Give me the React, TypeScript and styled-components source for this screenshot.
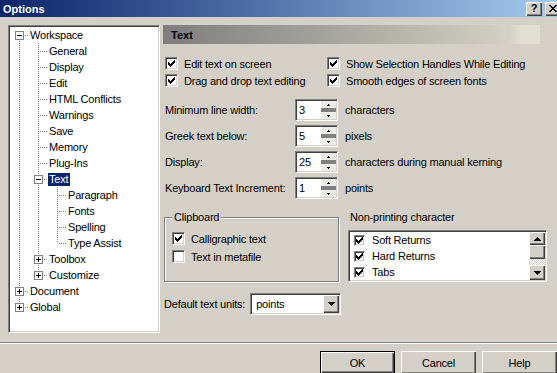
import React from 'react';
import styled, { createGlobalStyle, css } from 'styled-components';

const face = '#d4d0c8';
const shadow = '#808080';
const dark = '#404040';

const GlobalStyle = createGlobalStyle`
  html, body {
    margin: 0;
    padding: 0;
    background: ${face};
  }
  body {
    font: 11px 'Liberation Sans', Arial, sans-serif;
    letter-spacing: -0.2px;
    color: #000;
  }
  * { box-sizing: border-box; }
`;

const sunken = css`
  border-style: solid;
  border-width: 1px;
  border-color: ${shadow} #fff #fff ${shadow};
  box-shadow: inset 1px 1px ${dark}, inset -1px -1px ${face};
  padding: 1px;
`;

const raised = css`
  background: ${face};
  box-shadow: inset 1px 1px #fff, inset -1px -1px ${dark}, inset -2px -2px ${shadow};
`;

const Window = styled.div`
  width: 557px;
  height: 373px;
  overflow: hidden;
  display: flex;
  flex-direction: column;
`;

const TitleBar = styled.div`
  height: 17px;
  flex: none;
  display: flex;
  align-items: center;
  justify-content: space-between;
  padding-left: 3px;
  background: linear-gradient(to right, #0a246a, #a6caf0);
`;

const Title = styled.span`
  color: #fff;
  font-weight: bold;
  letter-spacing: 0;
`;

const Caps = styled.div`
  display: flex;
  gap: 3px;
  margin-right: -4px;
`;

const CapButton = styled.div`
  ${raised};
  width: 16px;
  height: 14px;
  display: flex;
  align-items: center;
  justify-content: center;
  font-weight: bold;
  font-size: 11px;
  line-height: 1;
`;

const Body = styled.div`
  display: flex;
  gap: 3px;
  padding: 8px 0 0 8px;
  height: 325px;
  flex: none;
`;

/* ---------- tree ---------- */

const Tree = styled.div`
  ${sunken};
  width: 152px;
  height: 308px;
  flex: none;
  background: #fff;
`;

const Row = styled.div`
  display: flex;
  height: 16px;
  align-items: center;
`;

const Guide = styled.div<{ $line: boolean }>`
  width: 19px;
  height: 16px;
  flex: none;
  ${(p) =>
    p.$line &&
    css`
      background: repeating-linear-gradient(to bottom, ${shadow} 0 1px, transparent 1px 2px) 9px 0 / 1px 100% no-repeat;
    `}
`;

const Connector = styled.div<{ $first: boolean; $last: boolean }>`
  position: relative;
  width: 19px;
  height: 16px;
  flex: none;
  &::before {
    content: '';
    position: absolute;
    left: 9px;
    top: ${(p) => (p.$first ? 8 : 0)}px;
    bottom: ${(p) => (p.$last ? 8 : 0)}px;
    width: 1px;
    background: repeating-linear-gradient(to bottom, ${shadow} 0 1px, transparent 1px 2px);
  }
  &::after {
    content: '';
    position: absolute;
    left: 10px;
    top: 8px;
    width: 9px;
    height: 1px;
    background: repeating-linear-gradient(to right, transparent 0 1px, ${shadow} 1px 2px);
  }
`;

const Expander = styled.svg`
  position: absolute;
  left: 5px;
  top: 4px;
  z-index: 1;
`;

const NodeLabel = styled.span<{ $selected?: boolean }>`
  height: 13px;
  line-height: 13px;
  padding: 0 2px 0 1px;
  white-space: nowrap;
  background: ${(p) => (p.$selected ? '#0a246a' : 'transparent')};
  color: ${(p) => (p.$selected ? '#fff' : '#000')};
`;

type Node = {
  label: string;
  kids?: Node[];
  collapsed?: boolean;
  selected?: boolean;
};

const tree: Node[] = [
  {
    label: 'Workspace',
    kids: [
      { label: 'General' },
      { label: 'Display' },
      { label: 'Edit' },
      { label: 'HTML Conflicts' },
      { label: 'Warnings' },
      { label: 'Save' },
      { label: 'Memory' },
      { label: 'Plug-Ins' },
      {
        label: 'Text',
        selected: true,
        kids: [{ label: 'Paragraph' }, { label: 'Fonts' }, { label: 'Spelling' }, { label: 'Type Assist' }],
      },
      { label: 'Toolbox', kids: [], collapsed: true },
      { label: 'Customize', kids: [], collapsed: true },
    ],
  },
  { label: 'Document', kids: [], collapsed: true },
  { label: 'Global', kids: [], collapsed: true },
];

type Flat = { node: Node; guides: boolean[]; first: boolean; last: boolean };

function flatten(nodes: Node[], guides: boolean[], out: Flat[]) {
  nodes.forEach((node, i) => {
    const last = i === nodes.length - 1;
    out.push({ node, guides, first: guides.length === 0 && i === 0, last });
    if (node.kids && !node.collapsed) flatten(node.kids, [...guides, !last], out);
  });
  return out;
}

const PlusMinus = ({ open }: { open: boolean }) => (
  <Expander width="9" height="9" viewBox="0 0 9 9" shapeRendering="crispEdges">
    <rect x="0.5" y="0.5" width="8" height="8" fill="#fff" stroke={shadow} />
    <path d="M2 4h5v1H2z" fill="#000" />
    {!open && <path d="M4 2h1v5H4z" fill="#000" />}
  </Expander>
);

const TreeView = () => (
  <Tree>
    {flatten(tree, [], []).map(({ node, guides, first, last }) => (
      <Row key={node.label}>
        {guides.map((g, i) => (
          <Guide key={i} $line={g} />
        ))}
        <Connector $first={first} $last={last}>
          {node.kids && <PlusMinus open={!node.collapsed} />}
        </Connector>
        <NodeLabel $selected={node.selected}>{node.label}</NodeLabel>
      </Row>
    ))}
  </Tree>
);

/* ---------- page ---------- */

const Page = styled.div`
  width: 394px;
  flex: none;
  display: flex;
  flex-direction: column;
`;

const PageHeader = styled.div`
  width: 377px;
  height: 19px;
  padding-left: 8px;
  display: flex;
  align-items: center;
  font-weight: bold;
  letter-spacing: 0;
  background: linear-gradient(
    to right,
    #7e7e7e 0%,
    #9c9c98 35%,
    #bdbcb0 70%,
    #cfcdc0 88%,
    ${face} 92%,
    #e0dfd0 95%,
    #e0dfd0 100%
  );
`;

const CheckGrid = styled.div`
  display: grid;
  grid-template-columns: 162px auto;
  row-gap: 4px;
  margin-top: 13px;
  padding-left: 2px;
`;

const CheckLabel = styled.label`
  display: flex;
  align-items: center;
  gap: 6px;
  height: 13px;
  white-space: nowrap;
`;

const Box = styled.span<{ $size?: number }>`
  ${sunken};
  width: ${(p) => p.$size ?? 13}px;
  height: ${(p) => p.$size ?? 13}px;
  flex: none;
  background: #fff;
  display: flex;
  align-items: center;
  justify-content: center;
`;

const Tick = () => (
  <svg width="7" height="7" viewBox="0 0 7 7" shapeRendering="crispEdges">
    <path
      d="M0 2h1v3H0zM1 3h1v3H1zM2 4h1v3H2zM3 3h1v3H3zM4 2h1v3H4zM5 1h1v3H5zM6 0h1v3H6z"
      fill="#000"
    />
  </svg>
);

const Check = ({ label, checked }: { label: string; checked: boolean }) => (
  <CheckLabel>
    <Box>{checked && <Tick />}</Box>
    {label}
  </CheckLabel>
);

const SpinList = styled.div`
  display: flex;
  flex-direction: column;
  gap: 4px;
  margin-top: 12px;
  padding-left: 2px;
`;

const SpinRow = styled.div`
  display: flex;
  align-items: center;
  height: 22px;
`;

const SpinLabel = styled.span`
  width: 130px;
  flex: none;
  white-space: nowrap;
`;

const SpinUnit = styled.span`
  margin-left: 7px;
  white-space: nowrap;
`;

const SpinBox = styled.div`
  ${sunken};
  width: 43px;
  height: 22px;
  flex: none;
  background: #fff;
  display: flex;
`;

const SpinValue = styled.span`
  flex: 1;
  padding: 2px 0 0 2px;
  line-height: 14px;
`;

const SpinCol = styled.div`
  width: 15px;
  display: flex;
  flex-direction: column;
`;

const SpinBtn = styled.div<{ $down?: boolean }>`
  flex: 1;
  display: flex;
  align-items: center;
  justify-content: center;
  background: #ecebe6;
  ${(p) =>
    p.$down
      ? css`border-top: 2px solid ${shadow};`
      : css`border-bottom: 2px solid ${shadow};`}
`;

const Arrow = ({ down, w = 5 }: { down?: boolean; w?: number }) => {
  const h = Math.ceil(w / 2);
  return (
    <svg width={w} height={h} viewBox={`0 0 ${w} ${h}`} shapeRendering="crispEdges">
      <path d={down ? `M0 0h${w}L${w / 2} ${h}z` : `M0 ${h}h${w}L${w / 2} 0z`} fill="#000" />
    </svg>
  );
};

const spins: [string, string, string][] = [
  ['Minimum line width:', '3', 'characters'],
  ['Greek text below:', '5', 'pixels'],
  ['Display:', '25', 'characters during manual kerning'],
  ['Keyboard Text Increment:', '1', 'points'],
];

const Groups = styled.div`
  display: flex;
  gap: 8px;
  margin-top: 12px;
  padding-left: 1px;
`;

const Fieldset = styled.fieldset`
  margin: 0;
  width: 175px;
  padding: 8px 0 15px 7px;
  border: 1px solid ${shadow};
  box-shadow: inset 1px 1px #fff, 1px 1px #fff;
  display: flex;
  flex-direction: column;
  gap: 5px;
  min-width: 0;
`;

const Legend = styled.legend`
  padding: 0 2px;
  line-height: 13px;
  background: ${face};
`;

const ListGroup = styled.div`
  width: 200px;
  display: flex;
  flex-direction: column;
  gap: 6px;
  padding-left: 1px;
`;

const ListCaption = styled.div`
  height: 13px;
  line-height: 13px;
  padding-left: 2px;
`;

const ListBox = styled.div`
  ${sunken};
  height: 52px;
  background: #fff;
  display: flex;
`;

const ListItems = styled.div`
  flex: 1;
`;

const ListItem = styled.div`
  height: 16px;
  display: flex;
  align-items: center;
  gap: 7px;
  padding-left: 4px;
`;

const ScrollBar = styled.div`
  width: 16px;
  display: flex;
  flex-direction: column;
`;

const ScrollBtn = styled.div<{ $h: number }>`
  ${raised};
  height: ${(p) => p.$h}px;
  display: flex;
  align-items: center;
  justify-content: center;
`;

const Track = styled.div`
  flex: 1;
  background: conic-gradient(#fff 25%, ${face} 0 50%, #fff 0 75%, ${face} 0) 0 0 / 2px 2px;
`;

const UnitsRow = styled.div`
  display: flex;
  align-items: center;
  gap: 5px;
  margin-top: 11px;
  padding-left: 1px;
`;

const Combo = styled.div`
  ${sunken};
  width: 91px;
  height: 22px;
  background: #fff;
  display: flex;
`;

const ComboText = styled.span`
  flex: 1;
  padding: 3px 0 0 4px;
  line-height: 13px;
`;

const ComboBtn = styled.div`
  ${raised};
  width: 16px;
  display: flex;
  align-items: center;
  justify-content: center;
`;

/* ---------- footer ---------- */

const Footer = styled.div`
  flex: 1;
  border-top: 1px solid ${shadow};
  box-shadow: inset 0 1px #fff;
  padding-top: 8px;
  display: flex;
  justify-content: flex-end;
  gap: 6px;
`;

const DlgButton = styled.div<{ $default?: boolean }>`
  ${raised};
  width: 75px;
  height: 23px;
  display: flex;
  align-items: center;
  justify-content: center;
  border: ${(p) => (p.$default ? '1px solid #000' : 'none')};
`;

export default function App() {
  return (
    <Window>
      <GlobalStyle />
      <TitleBar>
        <Title>Options</Title>
        <Caps>
          <CapButton>?</CapButton>
          <CapButton>
            <svg width="8" height="7" viewBox="0 0 8 7" shapeRendering="crispEdges">
              <path
                d="M0 0h2v1h-2zM6 0h2v1h-2zM1 1h2v1h-2zM5 1h2v1h-2zM2 2h4v1h-4zM3 3h2v1h-2zM2 4h4v1h-4zM1 5h2v1h-2zM5 5h2v1h-2zM0 6h2v1h-2zM6 6h2v1h-2z"
                fill="#000"
              />
            </svg>
          </CapButton>
        </Caps>
      </TitleBar>

      <Body>
        <TreeView />
        <Page>
          <PageHeader>Text</PageHeader>

          <CheckGrid>
            <Check label="Edit text on screen" checked />
            <Check label="Show Selection Handles While Editing" checked />
            <Check label="Drag and drop text editing" checked />
            <Check label="Smooth edges of screen fonts" checked />
          </CheckGrid>

          <SpinList>
            {spins.map(([label, value, unit]) => (
              <SpinRow key={label}>
                <SpinLabel>{label}</SpinLabel>
                <SpinBox>
                  <SpinValue>{value}</SpinValue>
                  <SpinCol>
                    <SpinBtn>
                      <Arrow w={3} />
                    </SpinBtn>
                    <SpinBtn $down>
                      <Arrow w={3} down />
                    </SpinBtn>
                  </SpinCol>
                </SpinBox>
                <SpinUnit>{unit}</SpinUnit>
              </SpinRow>
            ))}
          </SpinList>

          <Groups>
            <Fieldset>
              <Legend>Clipboard</Legend>
              <Check label="Calligraphic text" checked />
              <Check label="Text in metafile" checked={false} />
            </Fieldset>

            <ListGroup>
              <ListCaption>Non-printing character</ListCaption>
              <ListBox>
                <ListItems>
                  {['Soft Returns', 'Hard Returns', 'Tabs'].map((t) => (
                    <ListItem key={t}>
                      <Box $size={11}>
                        <Tick />
                      </Box>
                      {t}
                    </ListItem>
                  ))}
                </ListItems>
                <ScrollBar>
                  <ScrollBtn $h={13}>
                    <Arrow w={7} />
                  </ScrollBtn>
                  <ScrollBtn $h={14} />
                  <Track />
                  <ScrollBtn $h={15}>
                    <Arrow w={7} down />
                  </ScrollBtn>
                </ScrollBar>
              </ListBox>
            </ListGroup>
          </Groups>

          <UnitsRow>
            <span>Default text units:</span>
            <Combo>
              <ComboText>points</ComboText>
              <ComboBtn>
                <Arrow w={7} down />
              </ComboBtn>
            </Combo>
          </UnitsRow>
        </Page>
      </Body>

      <Footer>
        <DlgButton $default>OK</DlgButton>
        <DlgButton>Cancel</DlgButton>
        <DlgButton>Help</DlgButton>
      </Footer>
    </Window>
  );
}
